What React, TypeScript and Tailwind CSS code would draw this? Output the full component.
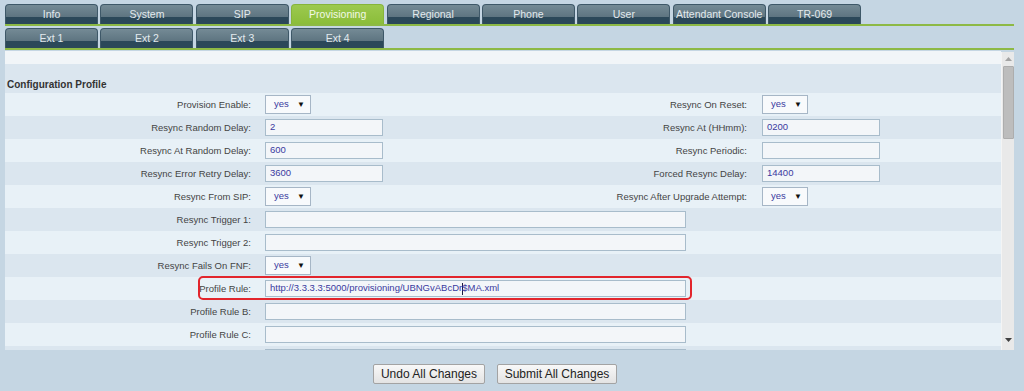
import React from "react";

type Field =
  | { kind: "select"; value: string }
  | { kind: "text"; value: string }
  | { kind: "long"; value: string; cursorAt?: number; highlight?: boolean };

type Row = { label: string; field: Field; rLabel?: string; rField?: Field };

const rows: Row[] = [
  { label: "Provision Enable:", field: { kind: "select", value: "yes" }, rLabel: "Resync On Reset:", rField: { kind: "select", value: "yes" } },
  { label: "Resync Random Delay:", field: { kind: "text", value: "2" }, rLabel: "Resync At (HHmm):", rField: { kind: "text", value: "0200" } },
  { label: "Resync At Random Delay:", field: { kind: "text", value: "600" }, rLabel: "Resync Periodic:", rField: { kind: "text", value: "" } },
  { label: "Resync Error Retry Delay:", field: { kind: "text", value: "3600" }, rLabel: "Forced Resync Delay:", rField: { kind: "text", value: "14400" } },
  { label: "Resync From SIP:", field: { kind: "select", value: "yes" }, rLabel: "Resync After Upgrade Attempt:", rField: { kind: "select", value: "yes" } },
  { label: "Resync Trigger 1:", field: { kind: "long", value: "" } },
  { label: "Resync Trigger 2:", field: { kind: "long", value: "" } },
  { label: "Resync Fails On FNF:", field: { kind: "select", value: "yes" } },
  {
    label: "Profile Rule:",
    field: { kind: "long", value: "http://3.3.3.3:5000/provisioning/UBNGvABcDr$MA.xml", cursorAt: 43, highlight: true },
  },
  { label: "Profile Rule B:", field: { kind: "long", value: "" } },
  { label: "Profile Rule C:", field: { kind: "long", value: "" } },
  { label: "", field: { kind: "long", value: "" } },
];

const mainTabs = ["Info", "System", "SIP", "Provisioning", "Regional", "Phone", "User", "Attendant Console", "TR-069"];
const extTabs = ["Ext 1", "Ext 2", "Ext 3", "Ext 4"];

function Tab({ label, active }: { label: string; active?: boolean }) {
  return (
    <div
      className={
        active
          ? "w-[93px] h-[20px] flex items-center justify-center rounded-t-[4px] border border-b-0 border-[#86b43a] bg-[linear-gradient(180deg,#9cc94e_0%,#8bbd3a_100%)] text-[#f2f9e6] text-[10.5px]"
          : "w-[93px] h-[20px] flex items-center justify-center rounded-t-[4px] border border-b-0 border-[#3e5868] bg-[linear-gradient(180deg,#748a95_0%,#5e7581_62%,#2b4859_64%,#2b4859_100%)] text-[#e2eaee] text-[10.5px]"
      }
    >
      <span>{label}</span>
    </div>
  );
}

function FieldView({ f }: { f: Field }) {
  if (f.kind === "select") {
    return (
      <div className="w-[46px] h-[19px] flex items-center justify-between pl-[8px] pr-[5px] border border-[#a6b6c6] bg-[#f8fafc] text-[#3a3aa0] text-[9.5px]">
        <span>{f.value}</span>
        <span className="text-[#111] text-[8px]">▼</span>
      </div>
    );
  }
  if (f.kind === "text") {
    return (
      <div className="w-[118px] h-[17px] flex items-center pl-[4px] border border-[#a8bccb] bg-[#f3f6f9] text-[#3a3aa0] text-[9.5px]">
        {f.value}
      </div>
    );
  }
  const before = f.cursorAt !== undefined ? f.value.slice(0, f.cursorAt) : f.value;
  const after = f.cursorAt !== undefined ? f.value.slice(f.cursorAt) : "";
  return (
    <div className="w-[421px] h-[17px] flex items-center pl-[4px] border border-[#a8bccb] bg-[#f3f6f9] text-[#3a3aa0] text-[9.5px] whitespace-pre">
      <span>{before}</span>
      {f.cursorAt !== undefined && <span className="inline-block w-[1px] h-[12px] bg-[#1a1a40] -mx-[0.5px]" />}
      <span>{after}</span>
    </div>
  );
}

export default function App() {
  return (
    <div className="w-[1024px] h-[391px] overflow-hidden bg-[#c5d6e3] font-['Liberation_Sans',Arial,sans-serif]">
      {/* Main tabs */}
      <div className="pl-[5px] pt-[4px]">
        <div className="flex gap-[2.4px]">
          {mainTabs.map((t) => (
            <Tab key={t} label={t} active={t === "Provisioning"} />
          ))}
        </div>
        <div className="w-[1009px] h-[2px] bg-[#8db945]" />
        <div className="flex gap-[2.4px] mt-[2px]">
          {extTabs.map((t) => (
            <Tab key={t} label={t} />
          ))}
        </div>
        <div className="w-[1009px] h-[2px] bg-[#8db945]" />

        {/* Content panel */}
        <div className="mt-[1px] w-[1009px] h-[299px] flex overflow-hidden">
          <div className="flex-1 overflow-hidden">
            <div className="h-[13px] bg-[#f1f5f8]" />
            <div className="h-[29px] bg-[#dbe6ef] flex items-end pb-[3px] pl-[2px]">
              <span className="text-[10px] font-bold text-[#333] leading-none">Configuration Profile</span>
            </div>
            {rows.map((r, i) => {
              const fld = r.field;
              const isLong = fld.kind === "long";
              const highlight = fld.kind === "long" && fld.highlight;
              return (
                <div
                  key={i}
                  className={
                    "relative h-[23px] grid grid-cols-[253px_244px_253px_1fr] items-center " +
                    (i % 2 === 0 ? "bg-[#e8f1f7]" : "bg-[#dbe6ef]")
                  }
                >
                  <div className="text-right pr-[7px] text-[9.5px] text-[#444] pt-[2px]">{r.label}</div>
                  <div className={isLong ? "col-span-3 pl-[7px]" : "pl-[7px]"}>
                    <FieldView f={fld} />
                  </div>
                  {!isLong && (
                    <>
                      <div className="text-right pr-[8px] text-[9.5px] text-[#444] pt-[2px]">{r.rLabel ?? ""}</div>
                      <div className="pl-[7px]">{r.rField && <FieldView f={r.rField} />}</div>
                    </>
                  )}
                  {highlight && (
                    <div className="absolute left-[193px] top-[-1px] w-[494px] h-[24px] border-2 border-[#e2252c] rounded-[5px] z-10 pointer-events-none" />
                  )}
                </div>
              );
            })}
          </div>
          {/* Scrollbar */}
          <div className="w-[13px] mt-[1px] bg-[#e9e9e9] border-l border-[#f4f4f4] flex flex-col items-center">
            <div className="h-[14px] flex items-center justify-center">
              <svg width="7" height="4" viewBox="0 0 7 4">
                <path d="M0 4 L3.5 0 L7 4 Z" fill="#a3a3a3" />
              </svg>
            </div>
            <div className="w-[11px] h-[73px] bg-[#bdbdbd] border border-[#adadad] rounded-[1px]" />
            <div className="flex-1" />
            <div className="h-[14px] flex items-center justify-center mb-[3px]">
              <svg width="7" height="4" viewBox="0 0 7 4">
                <path d="M0 0 L7 0 L3.5 4 Z" fill="#404040" />
              </svg>
            </div>
          </div>
        </div>
      </div>

      {/* Buttons */}
      <div className="flex gap-[12px] pl-[373px] mt-[14px]">
        <button className="w-[112px] h-[20px] border border-[#a3a3a3] rounded-[2px] bg-[linear-gradient(180deg,#f8f8f8_0%,#e3e3e3_100%)] text-[12px] text-[#222]">
          Undo All Changes
        </button>
        <button className="w-[120px] h-[20px] border border-[#a3a3a3] rounded-[2px] bg-[linear-gradient(180deg,#f8f8f8_0%,#e3e3e3_100%)] text-[12px] text-[#222]">
          Submit All Changes
        </button>
      </div>
    </div>
  );
}
